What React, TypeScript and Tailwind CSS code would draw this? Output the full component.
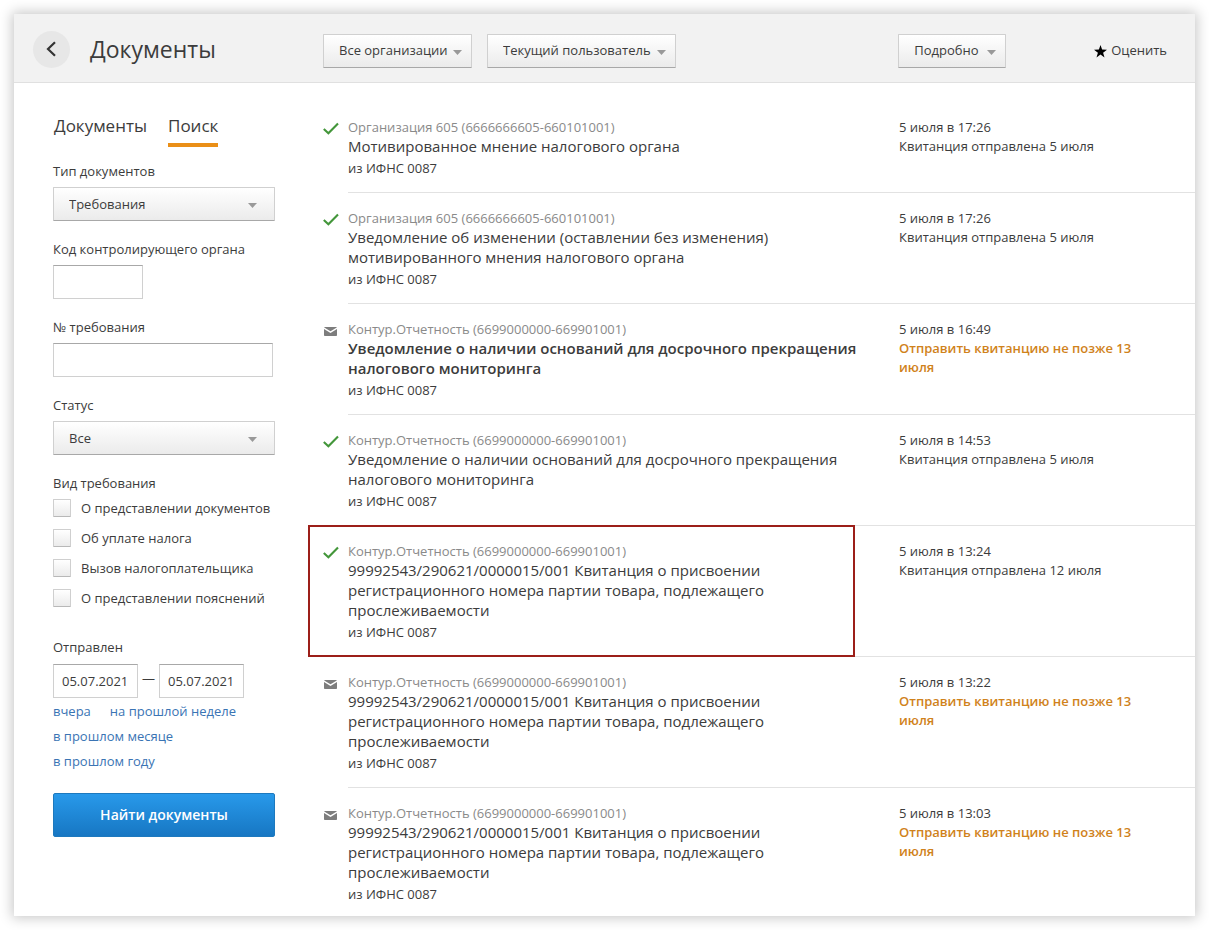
import React from "react";

type Status = "done" | "pending";

interface Doc {
  status: Status;
  org: string;
  title: string;
  time: string;
  receipt: string;
  unread?: boolean;
  highlighted?: boolean;
}

const ORG_605 = "Организация 605 (6666666605-660101001)";
const KONTUR = "Контур.Отчетность (6699000000-669901001)";
const BATCH =
  "99992543/290621/0000015/001 Квитанция о присвоении регистрационного номера партии товара, подлежащего прослеживаемости";
const MONITORING = "Уведомление о наличии оснований для досрочного прекращения налогового мониторинга";

const docs: Doc[] = [
  { status: "done", org: ORG_605, title: "Мотивированное мнение налогового органа", time: "5 июля в 17:26", receipt: "Квитанция отправлена 5 июля" },
  { status: "done", org: ORG_605, title: "Уведомление об изменении (оставлении без изменения) мотивированного мнения налогового органа", time: "5 июля в 17:26", receipt: "Квитанция отправлена 5 июля" },
  { status: "pending", org: KONTUR, title: MONITORING, time: "5 июля в 16:49", receipt: "Отправить квитанцию не позже 13 июля", unread: true },
  { status: "done", org: KONTUR, title: MONITORING, time: "5 июля в 14:53", receipt: "Квитанция отправлена 5 июля" },
  { status: "done", org: KONTUR, title: BATCH, time: "5 июля в 13:24", receipt: "Квитанция отправлена 12 июля", highlighted: true },
  { status: "pending", org: KONTUR, title: BATCH, time: "5 июля в 13:22", receipt: "Отправить квитанцию не позже 13 июля" },
  { status: "pending", org: KONTUR, title: BATCH, time: "5 июля в 13:03", receipt: "Отправить квитанцию не позже 13 июля" },
];

const kinds = ["О представлении документов", "Об уплате налога", "Вызов налогоплательщика", "О представлении пояснений"];

function CheckIcon() {
  return (
    <svg className="mt-1 h-4 w-4" viewBox="0 0 16 16" fill="none" aria-hidden="true">
      <path d="M0.8 8 5.4 12.3 15 2.4" stroke="#43963a" strokeWidth="2.1" />
    </svg>
  );
}

function MailIcon() {
  return (
    <svg className="mt-1 h-4 w-4" viewBox="0 0 16 16" aria-hidden="true">
      <path d="M1.6 4h11.8q.6 0 .4.4L7.5 8.2 1.2 4.4q-.2-.4.4-.4Z" fill="#7d7d7d" />
      <path d="M1 6 7.5 9.9 14 6v6.2q0 .8-.8.8H1.8q-.8 0-.8-.8Z" fill="#7d7d7d" />
    </svg>
  );
}

interface DropdownProps {
  id: string;
  value: string;
  label?: string;
  className: string;
  caret: string;
}

function Dropdown({ id, value, label, className, caret }: DropdownProps) {
  return (
    <div className={`relative ${className}`}>
      <select
        id={id}
        aria-label={label}
        className="block h-[34px] w-full appearance-none rounded-[1px] border border-[#d0d0d0] border-b-[#a8a8a8] bg-linear-to-b from-white to-[#ebebeb] pl-[15px] text-[13px] text-[#3c3c3c]"
      >
        <option>{value}</option>
      </select>
      <svg className={`pointer-events-none absolute top-4 h-[5px] w-[9px] ${caret}`} viewBox="0 0 9 5" aria-hidden="true">
        <path d="M0 0h9L4.5 5Z" fill="#999" />
      </svg>
    </div>
  );
}

const inputClass = "block h-[34px] rounded-none border border-[#d0d0d0] border-t-[#a8a8a8] bg-white px-2 text-[13px]";

function DocumentRow({ doc, last }: { doc: Doc; last: boolean }) {
  return (
    <li className="relative flex">
      {doc.highlighted && (
        <div className="pointer-events-none absolute -top-px bottom-0 -left-[15px] right-[340px] border-2 border-[#9c1f19]" />
      )}
      <div className="w-[25px] shrink-0 pt-[15px]">{doc.status === "done" ? <CheckIcon /> : <MailIcon />}</div>
      <div className={`flex min-w-0 flex-1 pt-4 ${last ? "pb-[9px]" : "border-b border-[#e2e2e2] pb-[11px]"}`}>
        <div className="min-w-0 flex-1 pr-[38px]">
          <p className="leading-[18px] text-[#8a8a8a]">{doc.org}</p>
          <h2 className={`text-[15px] leading-5 ${doc.unread ? "font-semibold" : ""}`}>{doc.title}</h2>
          <p className="leading-[25px]">из ИФНС 0087</p>
        </div>
        <div className="w-[296px] shrink-0 pr-[50px] leading-[19px]">
          <p>{doc.time}</p>
          <p className={doc.status === "pending" ? "font-semibold text-[#d0821b]" : ""}>{doc.receipt}</p>
        </div>
      </div>
    </li>
  );
}

export default function App() {
  return (
    <div className="min-h-screen bg-white px-[14px] pt-[14px] pb-[14px] font-['Open_Sans','Noto_Sans',sans-serif] text-[13px] text-[#3c3c3c]">
      <div className="bg-white shadow-[0_0_12px_2px_rgba(0,0,0,0.22)]">
        <header className="flex h-[69px] items-center border-b border-[#e0e0e0] bg-[#f2f2f2] pt-[6px] pl-[19px] pr-7">
          <div className="flex w-[290px] items-center gap-5 pb-1">
            <button type="button" aria-label="Назад" className="flex h-[37px] w-[37px] items-center justify-center rounded-full bg-[#e7e7e7]">
              <svg className="h-4 w-3" viewBox="0 0 12 16" fill="none" aria-hidden="true">
                <path d="M9 1.2 2 8l7 6.8" stroke="#333" strokeWidth="2.2" />
              </svg>
            </button>
            <h1 className="text-[23px] leading-8">Документы</h1>
          </div>
          <Dropdown id="org" label="Организация" value="Все организации" className="w-[149px]" caret="right-[10px]" />
          <Dropdown id="user" label="Пользователь" value="Текущий пользователь" className="ml-[15px] w-[189px]" caret="right-[10px]" />
          <div className="ml-auto flex items-center">
            <Dropdown id="view" label="Вид списка" value="Подробно" className="w-[108px]" caret="right-[10px]" />
            <a href="#rate" className="ml-[88px] flex items-center gap-1">
              <svg className="h-[13px] w-[13px]" viewBox="0 0 13 13" aria-hidden="true">
                <path d="M6.5 0 8.1 4.6 13 4.7 9.1 7.7l1.4 4.8-4-2.9-4 2.9 1.4-4.8L0 4.7l4.9-.1Z" fill="#000" />
              </svg>
              Оценить
            </a>
          </div>
        </header>

        <div className="flex">
          <aside className="w-[309px] shrink-0 pt-[31px] pr-12 pl-[39px]">
            <nav className="flex gap-[21px] pl-px text-[17px] leading-6">
              <a href="#documents" className="pb-[5px]">Документы</a>
              <a href="#search" className="border-b-4 border-[#ea8f17] pb-[5px]">Поиск</a>
            </nav>

            <form className="pt-[14px] leading-5" onSubmit={(e) => e.preventDefault()}>
              <div className="flex flex-col gap-[18px]">
                <div className="flex flex-col gap-[6px]">
                  <label htmlFor="type">Тип документов</label>
                  <Dropdown id="type" value="Требования" className="w-full" caret="right-[18px]" />
                </div>
                <div className="flex flex-col gap-[6px]">
                  <label htmlFor="code">Код контролирующего органа</label>
                  <input id="code" type="text" className={`${inputClass} w-[90px]`} />
                </div>
                <div className="flex flex-col gap-[6px]">
                  <label htmlFor="number">№ требования</label>
                  <input id="number" type="text" className={`${inputClass} w-[220px]`} />
                </div>
                <div className="flex flex-col gap-[6px]">
                  <label htmlFor="status">Статус</label>
                  <Dropdown id="status" value="Все" className="w-full" caret="right-[18px]" />
                </div>
              </div>

              <fieldset className="mt-[18px]">
                <legend>Вид требования</legend>
                <div className="flex flex-col gap-[10px] pt-[5px]">
                  {kinds.map((kind) => (
                    <label key={kind} className="flex items-center gap-[10px] whitespace-nowrap">
                      <input
                        type="checkbox"
                        className="h-[18px] w-[18px] shrink-0 appearance-none rounded-[1px] border border-[#cfcfcf] border-b-[#b8b8b8] bg-linear-to-b from-white to-[#ebebeb]"
                      />
                      {kind}
                    </label>
                  ))}
                </div>
              </fieldset>

              <fieldset className="mt-[29px]">
                <legend>Отправлен</legend>
                <div className="flex gap-1 pt-[7px]">
                  <input type="text" aria-label="Дата с" defaultValue="05.07.2021" className={`${inputClass} w-[85px]`} />
                  <span className="w-[13px] text-center leading-7">—</span>
                  <input type="text" aria-label="Дата по" defaultValue="05.07.2021" className={`${inputClass} w-[85px]`} />
                </div>
              </fieldset>
              <div className="flex flex-wrap gap-x-[19px] pt-px leading-[25px] text-[#3a74b4]">
                <a href="#yesterday">вчера</a>
                <a href="#week">на прошлой неделе</a>
                <a href="#month" className="w-full">в прошлом месяце</a>
                <a href="#year" className="w-full">в прошлом году</a>
              </div>
              <button
                type="submit"
                className="mt-[19px] h-11 w-full rounded-[2px] border border-[#1d79be] bg-linear-to-b from-[#2899ea] to-[#1777c3] text-[14px] font-semibold text-white"
              >
                Найти документы
              </button>
            </form>
          </aside>

          <main className="min-w-0 flex-1 pt-[19px]">
            <ul>
              {docs.map((doc, i) => (
                <DocumentRow key={i} doc={doc} last={i === docs.length - 1} />
              ))}
            </ul>
          </main>
        </div>
      </div>
    </div>
  );
}
